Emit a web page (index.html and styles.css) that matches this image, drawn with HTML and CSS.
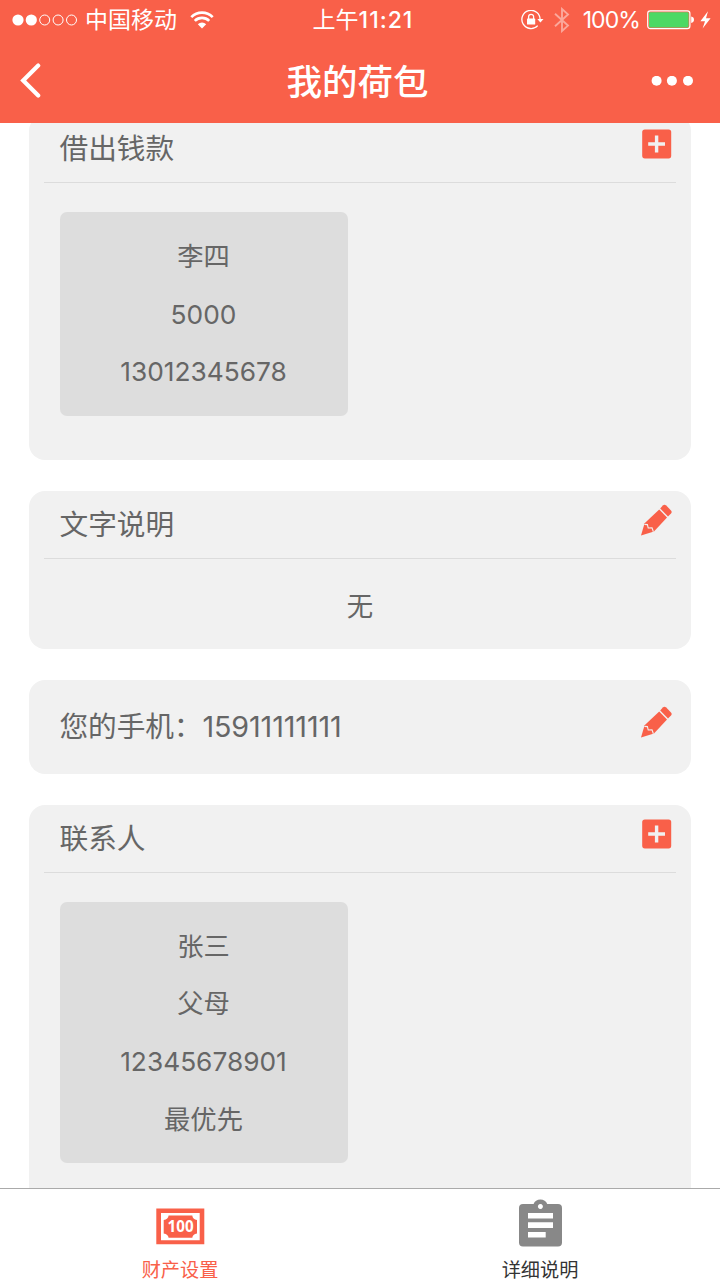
FILE: index.html
```html
<!DOCTYPE html>
<html lang="zh-CN">
<head>
    <meta charset="UTF-8">
    <meta name="viewport" content="width=device-width, initial-scale=1.0">
    <title>我的荷包</title>
    <link rel="stylesheet" href="styles.css">
</head>
<body>
    <!-- shared icons -->
    <svg class="defs">
        <symbol id="icon-add" viewBox="0 0 30 30">
            <rect x="0.2" y="0.4" width="29" height="29" rx="2.6" fill="#f96049"/>
            <path d="M14.6 6.6v16.8M6.2 15h16.8" stroke="#f1f1f1" stroke-width="3.4"/>
        </symbol>
        <symbol id="icon-edit" viewBox="0 0 32 32">
            <path fill="#f96049" d="M20.2 4.4L22.8 1.6Q24.4 0 26.2 1.6L31 6.4Q32.4 8 31 9.6L28 12.4Z"/>
            <path fill="#f96049" d="M19.2 5.4L27 13.4L14 27.4L1 31.4L4.6 19.2Z"/>
            <path fill="none" stroke="#f1f1f1" stroke-width="1.1" d="M4.4 20.4L7.4 20.6L8.2 24L12 23.8L13.4 27.8"/>
        </symbol>
    </svg>

    <div class="page">
        <header class="header">
            <div class="status-bar">
                <div class="status-left">
                    <svg class="signal" width="66" height="12" viewBox="0 0 66 12">
                        <g fill="#fff">
                            <circle cx="6" cy="6" r="5.6"/>
                            <circle cx="19.3" cy="6" r="5.6"/>
                        </g>
                        <g fill="none" stroke="#fff" stroke-width="1">
                            <circle cx="32.7" cy="6" r="5"/>
                            <circle cx="46.1" cy="6" r="5"/>
                            <circle cx="59.5" cy="6" r="5"/>
                        </g>
                    </svg>
                    <span class="carrier">中国移动</span>
                    <svg width="24" height="18" viewBox="0 0 24 18">
                        <g fill="none" stroke="#fff" stroke-width="2.7">
                            <path d="M1.3 6.1a15.2 15.2 0 0 1 21.4 0"/>
                            <path d="M4.8 9.9a10.3 10.3 0 0 1 14.4 0"/>
                        </g>
                        <path fill="#fff" d="M7.8 13.2a6 6 0 0 1 8.4 0L12 17.4Z"/>
                    </svg>
                </div>
                <div class="status-time">上午<b>11:21</b></div>
                <div class="status-right">
                    <svg width="23" height="20" viewBox="0 0 23 20">
                        <path fill="none" stroke="#fff" stroke-width="1.3" d="M16.7 15.6A9.1 9.1 0 1 1 19.1 9.6"/>
                        <path fill="#fff" d="M16.3 9h6.2l-3.1 3.6Z"/>
                        <rect x="6" y="8.6" width="8.2" height="6" rx="0.6" fill="#fff"/>
                        <path fill="none" stroke="#fff" stroke-width="1.3" d="M7.6 9V6.8a2.5 2.5 0 0 1 5 0V9"/>
                    </svg>
                    <svg class="bluetooth" width="16" height="26" viewBox="0 0 16 26">
                        <path fill="none" stroke="#fff" stroke-width="1.9" d="M1 6.8L14 18.6L8 24V2L14 7.4L1 19.2"/>
                    </svg>
                    <span class="percent">100%</span>
                    <svg class="battery" width="48" height="20" viewBox="0 0 48 20">
                        <rect x="0.7" y="0.9" width="42.2" height="17.8" rx="2.6" fill="none" stroke="#fff" stroke-width="1.2"/>
                        <rect x="2" y="2.2" width="39.6" height="15.2" rx="1.4" fill="#4cd964"/>
                        <path fill="#fff" d="M44.2 6.6q2.8 0.6 2.8 3.2t-2.8 3.2Z"/>
                    </svg>
                    <svg width="11" height="18" viewBox="0 0 11 18">
                        <path fill="#fff" d="M8 0.2L0.4 10.2H5L2.6 17.6L10.6 7.2H6Z"/>
                    </svg>
                </div>
            </div>
            <div class="nav-bar">
                <svg class="back" width="22" height="36" viewBox="0 0 22 36">
                    <path fill="none" stroke="#fff" stroke-width="4.2" stroke-linecap="round" stroke-linejoin="miter" d="M19.2 2.6L4.2 17.4L19.2 32.4"/>
                </svg>
                <h1>我的荷包</h1>
                <svg class="more" width="42" height="10" viewBox="0 0 42 10">
                    <g fill="#fff">
                        <circle cx="5.6" cy="4.8" r="5"/>
                        <circle cx="20.9" cy="4.8" r="5"/>
                        <circle cx="37" cy="4.8" r="5"/>
                    </g>
                </svg>
            </div>
        </header>

        <main class="content">
            <section class="card">
                <div class="card-head">
                    <h2>借出钱款</h2>
                    <svg class="add"><use href="#icon-add"/></svg>
                </div>
                <div class="card-body">
                    <div class="item">
                        <p>李四</p>
                        <p>5000</p>
                        <p>13012345678</p>
                    </div>
                </div>
            </section>

            <section class="card">
                <div class="card-head">
                    <h2>文字说明</h2>
                    <svg class="edit"><use href="#icon-edit"/></svg>
                </div>
                <p class="empty">无</p>
            </section>

            <section class="card">
                <div class="phone">
                    <h2>您的手机：15911111111</h2>
                    <svg class="edit"><use href="#icon-edit"/></svg>
                </div>
            </section>

            <section class="card">
                <div class="card-head">
                    <h2>联系人</h2>
                    <svg class="add"><use href="#icon-add"/></svg>
                </div>
                <div class="card-body">
                    <div class="item">
                        <p>张三</p>
                        <p>父母</p>
                        <p>12345678901</p>
                        <p>最优先</p>
                    </div>
                </div>
            </section>
        </main>

        <nav class="tab-bar">
            <div class="tab active">
                <svg width="50" height="50" viewBox="0 0 50 50">
                    <path fill="#f96049" fill-rule="evenodd" d="M1.3 9.6H49.3V45.3H1.3ZM6 14V41.2H44.7V14Z"/>
                    <path fill="#f96049" d="M13.6 16.6H37.3Q37.6 20.6 42 21V34.4Q37.6 35 37.3 38.8H13.6Q13.2 35 8.7 34.4V21Q13.2 20.6 13.6 16.6Z"/>
                    <text class="bill-text" x="12.6" y="33.2" textLength="26" lengthAdjust="spacingAndGlyphs">100</text>
                </svg>
                <span>财产设置</span>
            </div>
            <div class="tab">
                <svg width="50" height="50" viewBox="0 0 50 50">
                    <path fill="#888" fill-rule="evenodd" d="M8 5H18.6C19.6 2 22.2 0.4 25.4 0.4S31.2 2 32.2 5H43Q47 5 47 9V43.6Q47 47.6 43 47.6H8Q4 47.6 4 43.6V9Q4 5 8 5ZM25.4 4.9a2.5 2.5 0 1 0 0.01 0ZM13 14V19.6H38V14ZM13 23.3V28.9H38V23.3ZM13 33V38.6H30.7V33Z"/>
                </svg>
                <span>详细说明</span>
            </div>
        </nav>
    </div>
</body>
</html>
```

FILE: styles.css
```css
* {
    box-sizing: border-box;
}
body {
    margin: 0;
    font-family: Inter, "Noto Sans CJK SC", sans-serif;
    color: #666;
    background-color: #fff;
}
h1, h2, p {
    margin: 0;
    font-weight: normal;
}
svg {
    display: block;
    flex-shrink: 0;
}
.defs {
    display: none;
}
.page {
    display: flex;
    flex-direction: column;
    height: 1280px;
    overflow: hidden;
}

/* header */
.header {
    height: 123px;
    flex-shrink: 0;
    color: #fff;
    background-color: #f96049;
}
.status-bar {
    display: grid;
    grid-template-columns: 1fr auto 1fr;
    align-items: center;
    height: 40px;
    padding: 0 9px 0 12px;
    font-size: 23px;
    line-height: 40px;
}
.status-left, .status-right {
    display: flex;
    align-items: center;
}
.status-right {
    justify-content: flex-end;
}
.carrier {
    margin: 0 13px 0 7px;
}
.status-time {
    margin-left: 3px;
}
.status-time b {
    font-weight: 500;
    letter-spacing: 1px;
}
.bluetooth {
    margin: 0 13px 0 10px;
    opacity: 0.45;
}
.percent {
    letter-spacing: -0.9px;
}
.battery {
    margin: 0 5px 0 7px;
}
.nav-bar {
    display: flex;
    align-items: center;
    justify-content: space-between;
    height: 82px;
    padding: 0 27px 0 19px;
}
.nav-bar h1 {
    margin: -4px 0 0 23px;
    font-size: 35.5px;
    font-weight: 500;
}

/* cards */
.content {
    flex: 1;
    min-height: 0;
    padding: 0 29px;
    overflow: hidden;
}
.card {
    margin-bottom: 31px;
    padding: 0 15px;
    border-radius: 16px;
    background-color: #f1f1f1;
}
.card:first-child {
    margin-top: -8px;
}
.card h2 {
    font-size: 28.7px;
    line-height: 67px;
}
.card-head {
    display: flex;
    justify-content: space-between;
    height: 68px;
    padding: 0 4px 0 15.5px;
    border-bottom: 1px solid #dcdcdc;
}
.add {
    width: 30px;
    height: 30px;
    margin-top: 14px;
}
.edit {
    width: 32px;
    height: 32px;
    margin-top: 13px;
}
.card-body {
    padding: 29px 15.5px 44px;
}
.item {
    width: 288px;
    padding: 16px 0 15px;
    border-radius: 7px;
    background-color: #ddd;
}
.item p {
    font-size: 26.3px;
    line-height: 57.6px;
    text-align: center;
}
.empty {
    height: 90px;
    font-size: 26.4px;
    line-height: 94px;
    text-align: center;
}
.phone {
    display: flex;
    justify-content: space-between;
    height: 94px;
    padding: 13px 4px 0 15.5px;
}
.phone h2 {
    letter-spacing: -0.1px;
}

/* bottom tabs */
.tab-bar {
    display: flex;
    height: 92px;
    flex-shrink: 0;
    border-top: 1px solid #aaa;
}
.tab {
    flex: 1;
    display: flex;
    flex-direction: column;
    align-items: center;
    padding-top: 10px;
    color: #333;
    font-size: 19.2px;
    line-height: 29px;
}
.tab span {
    margin-top: 7px;
}
.tab.active {
    color: #f96049;
}
.bill-text {
    fill: #fff;
    font-family: "Open Sans", sans-serif;
    font-size: 16.5px;
    font-weight: bold;
}
```
